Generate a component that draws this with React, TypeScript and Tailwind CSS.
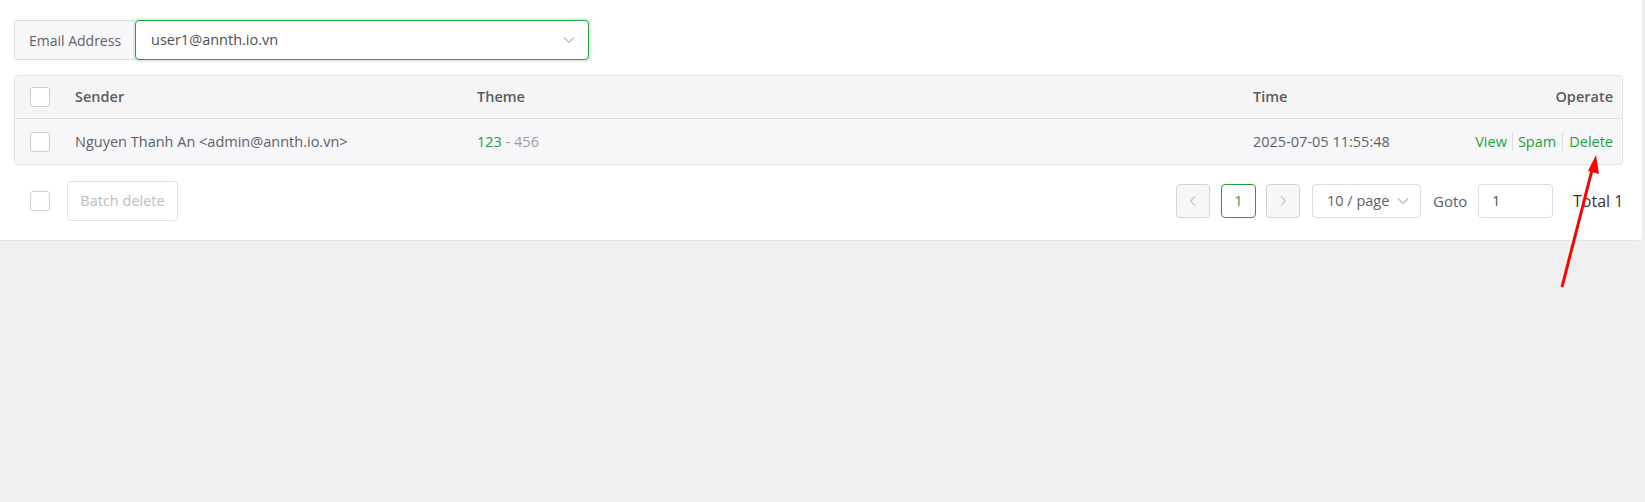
import React from "react";

const G = "#1fa03c";

function Checkbox() {
  return <div className="w-5 h-5 rounded-[3px] border border-[#d0d0d4] bg-white shrink-0" />;
}

function Chevron({ className = "" }: { className?: string }) {
  return (
    <svg className={className} width="14" height="14" viewBox="0 0 14 14" fill="none">
      <path d="M2 4.5 L7 9.5 L12 4.5" stroke="#b8b8bc" strokeWidth="1.1" />
    </svg>
  );
}

export default function App() {
  return (
    <div
      className="relative w-[1645px] h-[502px] bg-[#f0f0f0] text-[#606266]"
      style={{ fontFamily: '"Open Sans", "Noto Sans", sans-serif' }}
    >
      <div className="w-[1643px] bg-white border-r border-b border-[#e6e6e6] rounded-br-[4px] pl-[14px] pr-[19px] pt-[20px] pb-[19px]">
        {/* search */}
        <div className="flex h-[40px] w-[575px]">
          <div className="flex items-center justify-center whitespace-nowrap h-full bg-[#f8f8fa] border border-[#dcdcdf] rounded-l-[4px] text-[14px] text-[#5f6066] border-r-0 w-[121px] shrink-0">
            Email Address
          </div>
          <div className="flex-1 flex items-center justify-between h-full border border-[#1fa03c] rounded-[4px] shadow-[0_0_0_2px_rgba(31,160,60,0.15)] bg-white pl-[15px] pr-[12px]">
            <span className="text-[14.5px] text-[#4e4f55]">user1@annth.io.vn</span>
            <Chevron />
          </div>
        </div>

        {/* table */}
        <div className="mt-[15px] border border-[#e2e2e5] rounded-[4px] overflow-hidden bg-[#f7f7f9]">
          <div className="grid grid-cols-[60px_402px_776px_1fr_auto] items-center h-[43px] bg-[#f5f5f6] border-b border-[#dedee2] text-[14.5px] font-semibold text-[#5a5b61]">
            <div className="pl-[15px]"><Checkbox /></div>
            <div>Sender</div>
            <div>Theme</div>
            <div>Time</div>
            <div className="pr-[9px]">Operate</div>
          </div>
          <div className="grid grid-cols-[60px_402px_776px_1fr_auto] items-center h-[45px] text-[14.5px] text-[#5f6066]">
            <div className="pl-[15px]"><Checkbox /></div>
            <div>Nguyen Thanh An &lt;admin@annth.io.vn&gt;</div>
            <div>
              <span style={{ color: G }}>123</span>
              <span className="text-[#9a9aa0]"> - 456</span>
            </div>
            <div>2025-07-05 11:55:48</div>
            <div className="pr-[9px] flex items-center" style={{ color: G }}>
              <span>View</span>
              <span className="mx-[5px] w-px h-[19px] bg-[#dedee2]" />
              <span>Spam</span>
              <span className="mx-[6px] w-px h-[19px] bg-[#dedee2]" />
              <span>Delete</span>
            </div>
          </div>
        </div>

        {/* footer */}
        <div className="mt-[16px] flex items-center justify-between h-[40px]">
          <div className="flex items-center">
            <div className="pl-[16px]"><Checkbox /></div>
            <div className="ml-[17px] h-[40px] w-[111px] flex items-center justify-center border border-[#e2e2e5] rounded-[4px] text-[14.5px] text-[#bcbcc0]">
              Batch delete
            </div>
          </div>
          <div className="flex items-center text-[14.5px]">
            <div className="w-[34px] h-[34px] flex items-center justify-center border border-[#d4d4d8] rounded-[4px] bg-[#f7f7f9]">
              <svg width="12" height="12" viewBox="0 0 12 12" fill="none"><path d="M8 1.5 L3.5 6 L8 10.5" stroke="#c4c4c8" strokeWidth="1.1" /></svg>
            </div>
            <div className="ml-[11px] w-[35px] h-[34px] flex items-center justify-center border border-[#1fa03c] rounded-[4px]" style={{ color: G }}>
              1
            </div>
            <div className="ml-[10px] w-[34px] h-[34px] flex items-center justify-center border border-[#d4d4d8] rounded-[4px] bg-[#f7f7f9]">
              <svg width="12" height="12" viewBox="0 0 12 12" fill="none"><path d="M4 1.5 L8.5 6 L4 10.5" stroke="#c4c4c8" strokeWidth="1.1" /></svg>
            </div>
            <div className="ml-[12px] w-[109px] h-[34px] flex items-center justify-between border border-[#dcdcdf] rounded-[4px] pl-[14px] pr-[10px] text-[#5f6066]">
              <span>10 / page</span>
              <Chevron />
            </div>
            <div className="ml-[12px] w-[34px] text-[15px] text-[#5f6066] whitespace-nowrap">Goto</div>
            <div className="ml-[11px] w-[75px] h-[34px] flex items-center border border-[#dcdcdf] rounded-[4px] pl-[13px] text-[#4e4f55]">
              1
            </div>
            <div className="ml-[20px] w-[50px] text-[16px] text-[#333338] whitespace-nowrap">Total 1</div>
          </div>
        </div>
      </div>

      <svg className="absolute left-0 top-0 pointer-events-none" width="1645" height="502">
        <line x1="1562" y1="287" x2="1592" y2="170" stroke="#ff0000" strokeWidth="3" />
        <polygon points="1596,155 1588,171 1599,174" fill="#ff0000" />
      </svg>
    </div>
  );
}
